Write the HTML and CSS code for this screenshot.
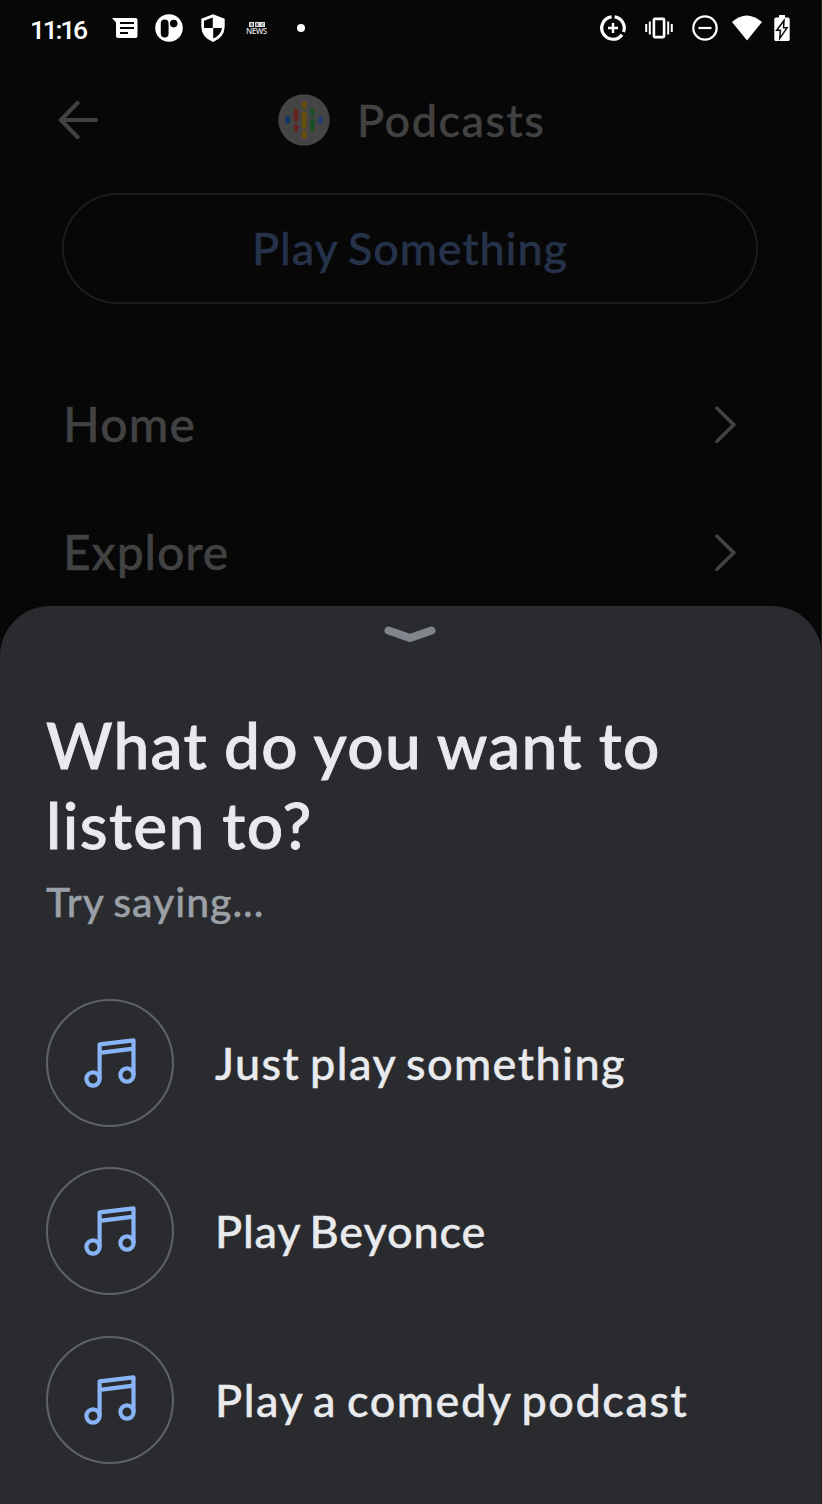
FILE: index.html
```html
<!DOCTYPE html>
<html lang="en">
<head>
<meta charset="utf-8">
<title>Podcasts</title>
<link rel="stylesheet" href="styles.css">
</head>
<body>
<svg class="defs" width="0" height="0" aria-hidden="true">
  <symbol id="note" viewBox="0 0 54 54">
    <g fill="none" stroke="#8ab4f8" stroke-width="4.2" stroke-linejoin="round">
      <circle cx="10" cy="43" r="6.6"/>
      <circle cx="44" cy="39" r="6.6"/>
      <path d="M16.6 43V8.300L50.500 4.300V39M16.600 16.800L50.500 12.600"/>
    </g>
  </symbol>
  <symbol id="chevron" viewBox="0 0 22 38">
    <path d="M3 3.200L19.800 19.800L3 36.200" fill="none" stroke="#424242" stroke-width="3.700" stroke-linecap="round" stroke-linejoin="round"/>
  </symbol>
</svg>
<main class="screen">
  <header class="status">
    <div class="status-left">
      <span class="clock">11:16</span>
      <svg class="messages" width="26" height="22" viewBox="0 0 26 22"><path d="M0 1H23.500Q25.500 1 25.500 3V19Q25.500 21 23.500 21H6Q4 21 4 19V5.500Z" fill="#fff"/><path d="M8 6H22M8 11H22M8 16H16" stroke="#070707" stroke-width="2"/></svg>
      <svg class="round" width="28" height="28" viewBox="0 0 28 28"><circle cx="14" cy="14" r="13.800" fill="#fff"/><rect x="5.800" y="5.500" width="7.800" height="18" rx="3.900" fill="#070707"/><circle cx="18.700" cy="9.600" r="3.800" fill="#070707"/></svg>
      <svg class="shield" width="24" height="28" viewBox="0 0 24 28"><path d="M12 .2L23.700 4.800V13Q23.300 23.500 12 28Q.7 23.500.3 13V4.800Z" fill="#fff"/><path d="M11.800 3.500V14H3V6.800ZM12.200 14H21Q20.200 21 12.200 24.500Z" fill="#070707"/></svg>
      <div class="bbc"><div class="bbc-logo"><b>B</b><b>B</b><b>C</b></div><span>NEWS</span></div>
      <i class="dot"></i>
    </div>
    <div class="status-right">
      <svg width="26" height="26" viewBox="0 0 26 26" fill="none" stroke="#fff"><path d="M11.600 1.900A11.200 11.200 0 0 0 3.600 19.200M3.600 19.200A11.200 11.200 0 0 0 22 19.700M14.600 1.900A11.200 11.200 0 0 1 23.500 17" stroke-width="3.200"/><path d="M13 8V18M8 13H18" stroke-width="2.400"/></svg>
      <svg width="28" height="22" viewBox="0 0 28 22" fill="none" stroke="#fff"><path d="M1.200 7V15M4.800 4.500V17.500M23.200 4.500V17.500M26.800 7V15" stroke-width="2"/><rect x="8.900" y="1.900" width="10.200" height="18.200" rx="1" stroke-width="2.600"/></svg>
      <svg width="26" height="26" viewBox="0 0 26 26" fill="none" stroke="#fff" stroke-width="2.200"><circle cx="13" cy="13" r="11.700"/><path d="M6.500 13H19.500"/></svg>
      <svg width="30" height="26" viewBox="0 0 30 26"><path d="M0 7Q14.500-6 30 7L15 25.500Z" fill="#fff"/></svg>
      <svg width="16" height="26" viewBox="0 0 16 26"><path d="M5 0H11V2.500H14Q15.700 2.500 15.700 4.200V24.500Q15.700 26 14 26H2Q.3 26 .3 24.500V4.200Q.3 2.500 2 2.500H5Z" fill="#fff"/><path d="M10 5.500L2.700 15.300H6.400L5.800 23.300L13 12.800H9.600Z" fill="#fff" stroke="#070707" stroke-width="1.500"/></svg>
    </div>
  </header>
  <nav class="titlebar">
    <svg class="back" width="40" height="40" viewBox="0 0 40 40" fill="none" stroke="#424242" stroke-width="4" stroke-linecap="round" stroke-linejoin="round"><path d="M19.500 3L2.800 20L19.500 37M3 20H38"/></svg>
    <svg class="podcast" width="52" height="52" viewBox="0 0 52 52" stroke-width="4.800" stroke-linecap="round"><circle cx="26" cy="26" r="25.700" fill="#454545"/>
      <path d="M9.600 24.500V27.500" stroke="#0f3562"/><path d="M18 17V25.500M18 32.500V35" stroke="#642522"/><path d="M26.200 9.700V12M26.200 19.500V33M26.200 39.500V42.500" stroke="#67500c"/><path d="M34.400 16.800V19.500M34.400 27V35" stroke="#18502a"/><path d="M42.500 24.500V27.500" stroke="#243e6c"/></svg>
    <span class="text t-title">Podcasts</span>
  </nav>
  <button class="play">Play Something</button>
  <div class="menu">
    <div class="row"><span class="text t-home">Home</span><svg width="22" height="38"><use href="#chevron"/></svg></div>
    <div class="row"><span class="text t-explore">Explore</span><svg width="22" height="38"><use href="#chevron"/></svg></div>
  </div>
  <section class="sheet">
    <svg class="handle" width="52" height="18" viewBox="0 0 52 18"><path d="M4.500 4.500L26 12L47.500 4.500" fill="none" stroke="#80868b" stroke-width="8" stroke-linecap="round"/></svg>
    <h1><span class="h-first">What do you want to</span><br><span class="h-second">listen to?</span></h1>
    <p class="hint">Try saying...</p>
    <div class="suggestions">
      <div class="suggestion"><div class="circle"><svg width="54" height="54"><use href="#note"/></svg></div><span class="s-just">Just play something</span></div>
      <div class="suggestion"><div class="circle"><svg width="54" height="54"><use href="#note"/></svg></div><span class="s-bey">Play Beyonce</span></div>
      <div class="suggestion"><div class="circle"><svg width="54" height="54"><use href="#note"/></svg></div><span class="s-comedy">Play a comedy podcast</span></div>
    </div>
  </section>
</main>
</body>
</html>
```
FILE: styles.css
```css
* { box-sizing: border-box; }
body { margin: 0; background: #070707; font-family: Lato, "Open Sans", sans-serif; font-weight: 500; -webkit-text-stroke: .4px currentColor; }
svg { display: block; flex: none; }
.defs { position: absolute; }
.screen { width: 822px; height: 1504px; display: flex; flex-direction: column; overflow: hidden; border-right: 1px solid #1c1c1c; }
.status { height: 56px; display: flex; justify-content: space-between; padding: 0 31px 0 31px; }
.status-left, .status-right { display: flex; align-items: center; color: #fff; }
.clock { width: 81px; font-family: Roboto, sans-serif; font-size: 26.5px; line-height: 30px; padding-top: 4px; letter-spacing: -2.3px; text-indent: -1px; -webkit-text-stroke: 0; }
.messages { margin-right: 17px; }
.round { margin-right: 18px; }
.shield { margin-right: 21px; }
.bbc { width: 22px; font: 600 8px/8px "Open Sans", sans-serif; padding-top: 1px; -webkit-text-stroke: 0; }
.bbc-logo { display: flex; gap: .5px; justify-content: center; }
.bbc b { width: 5px; height: 5px; background: #ddd; color: #444; font-size: 4px; line-height: 5px; text-align: center; }
.bbc span { display: block; font-weight: 600; letter-spacing: -.5px; color: #ddd; }
.dot { width: 8px; height: 8px; border-radius: 50%; background: #fff; margin-left: 29px; }
.status-right { gap: 19px; }
.status-right svg:nth-child(4) { margin-left: -5px; }
.status-right svg:nth-child(5) { margin-left: -7px; }
.titlebar { height: 137px; display: flex; align-items: flex-start; padding: 38px 0 0 58px; }
.back { margin: 6px 180px 0 0; }
.t-title { margin: 0 0 0 27px; font-size: 45px; line-height: 52px; letter-spacing: 1.5px; }
.text { color: #424242; white-space: nowrap; }
.play { width: 696px; height: 111px; margin: 0 0 0 62px; padding: 0 0 2px; border: 2px solid #1b1c1c; border-radius: 56px; background: transparent; color: #25324a; font: 500 45px/56px Lato, sans-serif; letter-spacing: .9px; word-spacing: -2px; flex: none; }
.menu { height: 302px; padding: 56px 85px 0 63px; }
.row { height: 128px; display: flex; align-items: center; justify-content: space-between; font-size: 48px; line-height: 60px; }
.t-home { letter-spacing: 1.2px; }
.t-explore { letter-spacing: .9px; }
.sheet { flex: 1; margin-right: -1px; background: #2a2b2e; border-radius: 50px 50px 0 0; padding: 20px 46px 0; color: #e8eaed; }
.handle { margin: 0 auto 0 338px; }
h1 { margin: 61px 0 0; font-size: 64px; line-height: 80px; font-weight: 500; white-space: nowrap; -webkit-text-stroke-width: .9px; }
.h-first { letter-spacing: 1.3px; word-spacing: -1.3px; }
.h-second { letter-spacing: 1.4px; word-spacing: -1px; }
.hint { margin: 12px 0 0; font-size: 41px; line-height: 50px; color: #9aa0a6; letter-spacing: .95px; word-spacing: -2px; }
.suggestions { display: flex; flex-direction: column; gap: 40.5px; margin-top: 71.5px; }
.suggestion { display: flex; align-items: center; gap: 41px; font-size: 45px; line-height: 54px; white-space: nowrap; word-spacing: -3px; }
.s-just { letter-spacing: 1.45px; }
.s-bey { letter-spacing: .85px; }
.s-comedy { letter-spacing: 1.55px; }
.circle { width: 128px; height: 128px; border: 2px solid #5f6368; border-radius: 50%; display: flex; align-items: center; justify-content: center; flex: none; }
```
